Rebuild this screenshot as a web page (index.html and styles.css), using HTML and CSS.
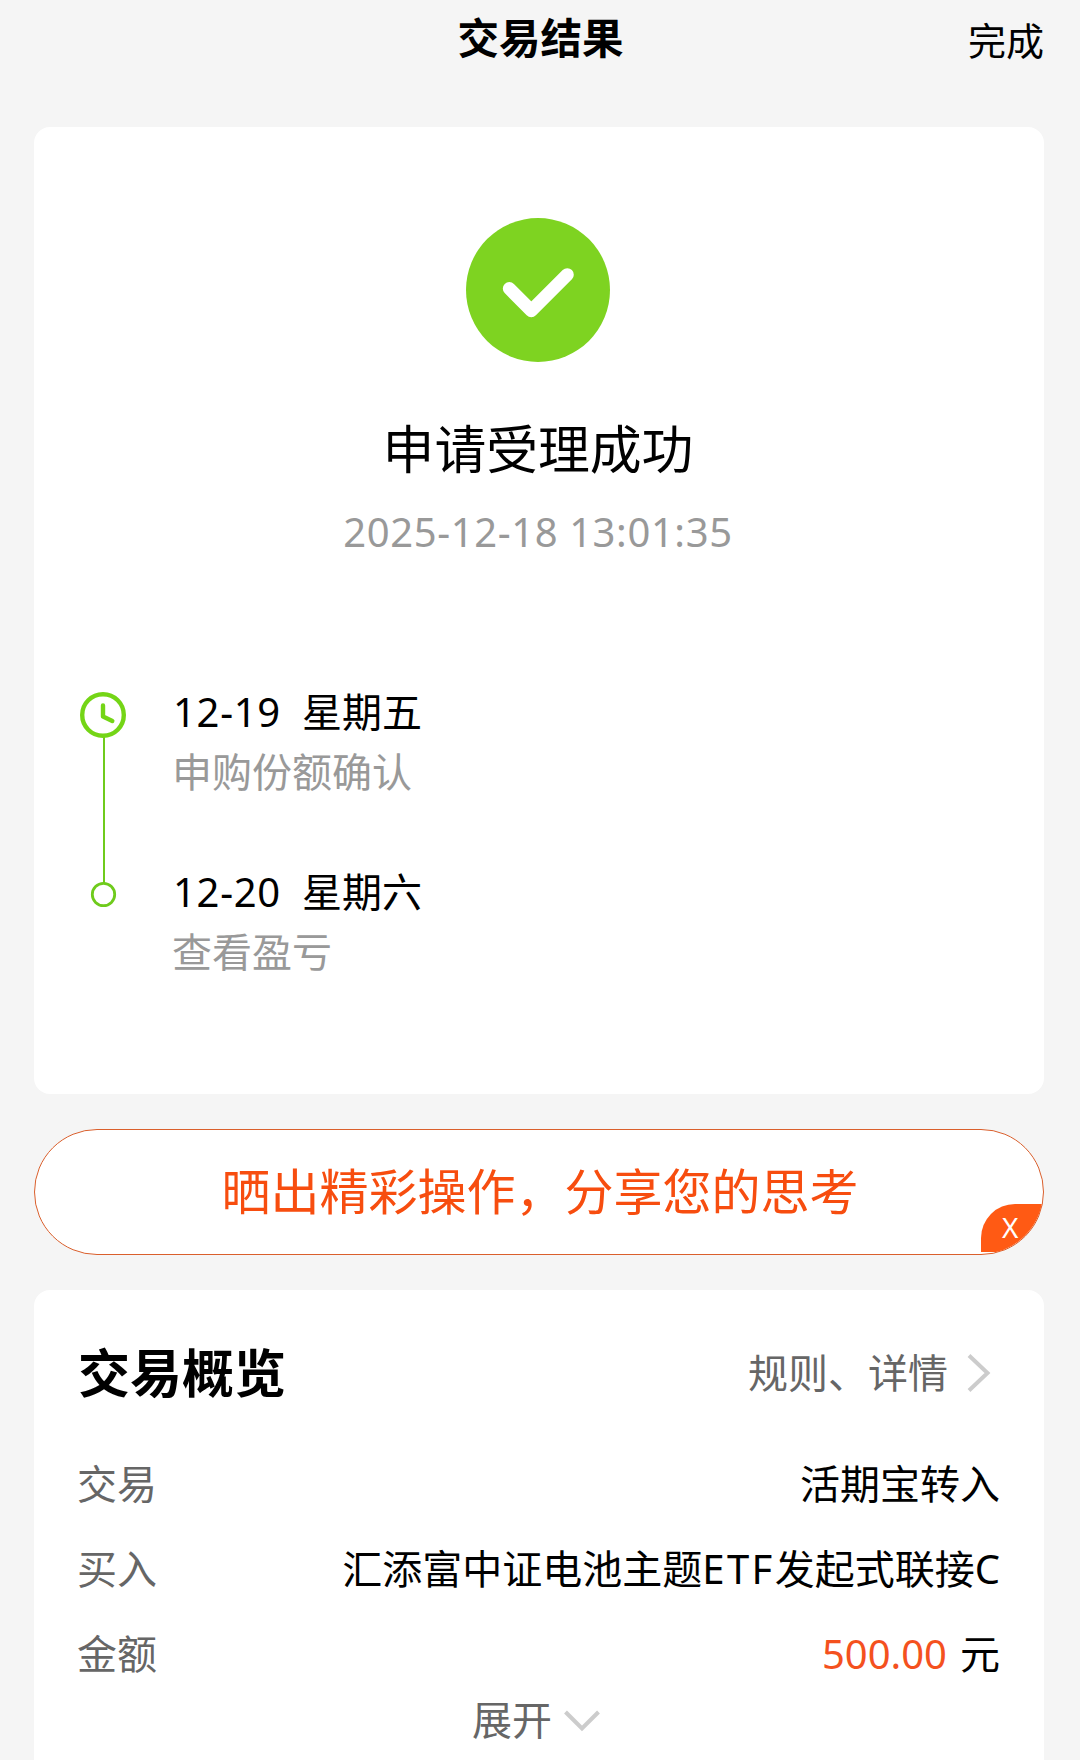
FILE: index.html
```html
<!DOCTYPE html>
<html lang="zh-CN">
<head>
<meta charset="utf-8">
<title>交易结果</title>
<link rel="stylesheet" href="styles.css">
</head>
<body>
<div class="page">
  <header class="header">
    <h1 class="header-title">交易结果</h1>
    <a class="header-done">完成</a>
  </header>

  <section class="card result">
    <svg class="result-icon" viewBox="0 0 144 144">
      <circle cx="72" cy="72" r="72" fill="#7ed321"/>
      <path d="M43.3 70.5 65.3 92.7 101.3 56.7" fill="none" stroke="#fff" stroke-width="13" stroke-linecap="round" stroke-linejoin="round"/>
    </svg>
    <h2 class="result-title">申请受理成功</h2>
    <p class="result-time">2025-12-18 13:01:35</p>

    <div class="timeline">
      <svg class="timeline-rail" viewBox="0 0 46 216">
        <path d="M24 45V191" stroke="#6fcb1c" stroke-width="2"/>
        <circle cx="23" cy="23" r="20.800" fill="#fff" stroke="#74d516" stroke-width="4.400"/>
        <path d="M23 13.500V24.500L32.300 29" fill="none" stroke="#74d516" stroke-width="4.400" stroke-linecap="round" stroke-linejoin="round"/>
        <circle cx="23.500" cy="202.500" r="11.200" fill="#fff" stroke="#6fcb1c" stroke-width="2.800"/>
      </svg>
      <ol class="steps">
        <li class="step">
          <div class="step-date"><span class="num">12-19</span><span>星期五</span></div>
          <div class="step-desc">申购份额确认</div>
        </li>
        <li class="step">
          <div class="step-date"><span class="num">12-20</span><span>星期六</span></div>
          <div class="step-desc">查看盈亏</div>
        </li>
      </ol>
    </div>
  </section>

  <div class="share">
    <span class="share-text">晒出精彩操作，分享您的思考</span>
    <span class="share-close">X</span>
  </div>

  <section class="card overview">
    <div class="overview-head">
      <h2 class="overview-title">交易概览</h2>
      <a class="overview-link">规则、详情
        <svg class="chevron-right" viewBox="0 0 24 40"><path d="M2 2.500 20.500 20 2 37.500" fill="none" stroke="#ccc" stroke-width="4"/></svg>
      </a>
    </div>
    <dl class="rows">
      <div class="row"><dt>交易</dt><dd>活期宝转入</dd></div>
      <div class="row"><dt>买入</dt><dd>汇添富中证电池主题<span class="latin">ETF</span>发起式联接C</dd></div>
      <div class="row"><dt>金额</dt><dd class="money"><span class="amount">500.00</span><span>元</span></dd></div>
    </dl>
    <div class="expand">展开
      <svg class="chevron-down" viewBox="0 0 36 22"><path d="M1.500 2 18 18.500 34.500 2" fill="none" stroke="#ccc" stroke-width="4"/></svg>
    </div>
  </section>
</div>
</body>
</html>
```
FILE: styles.css
```css
* {
  box-sizing: border-box;
  margin: 0;
  padding: 0;
}

body {
  background: #f5f5f5;
  color: #000;
  font-family: "Noto Sans", "Noto Sans CJK SC", sans-serif;
  font-size: 40px;
  line-height: 60px;
}

.page {
  display: flex;
  flex-direction: column;
  height: 1760px;
  padding: 0 36px 0 34px;
  overflow: hidden;
}

.header {
  display: grid;
  grid-template-columns: 1fr auto 1fr;
  flex: none;
  height: 127px;
  padding-top: 8px;
}

.header-title {
  grid-column: 2;
  padding-left: 3px;
  font-size: 41.5px;
  font-weight: 700;
}

.header-done {
  justify-self: end;
  padding-top: 2px;
  font-size: 38px;
}

.card {
  flex: none;
  background: #fff;
  border-radius: 16px;
}

.result {
  display: flex;
  flex-direction: column;
  align-items: center;
  height: 967px;
  padding-top: 91px;
  padding-right: 2px;
}

.result-icon {
  width: 144px;
  height: 144px;
}

.result-title {
  margin-top: 57px;
  font-size: 51.8px;
  font-weight: 400;
}

.result-time {
  margin-top: 28px;
  color: #999;
  line-height: 50px;
  letter-spacing: 0.6px;
}

.timeline {
  display: flex;
  align-self: stretch;
  gap: 46px;
  margin-top: 125px;
  padding-left: 46px;
}

.timeline-rail {
  flex: none;
  width: 46px;
  height: 216px;
  margin-top: 10px;
}

.steps {
  display: flex;
  flex-direction: column;
  gap: 60px;
  list-style: none;
}

.step-date {
  display: flex;
  gap: 21px;
}

.step-desc {
  color: #999;
}

.num {
  padding-left: 1px;
  letter-spacing: 0.7px;
}

.share {
  position: relative;
  display: flex;
  flex: none;
  align-items: center;
  justify-content: center;
  height: 126px;
  margin: 35px 0;
  overflow: hidden;
  background: #fff;
  border: 1px solid #da5f2c;
  border-radius: 63px;
  color: #f74d0f;
  font-size: 49px;
}

.share-text {
  padding: 0 0 2px 2px;
}

.share-close {
  position: absolute;
  right: 0;
  bottom: 2px;
  width: 62px;
  height: 48px;
  padding-left: 21px;
  background: #ff5a14;
  border-top-left-radius: 34px;
  color: #fff;
  font-size: 28px;
  line-height: 47px;
}

.overview {
  flex: 1;
  padding: 53px 44px 0 44px;
  border-radius: 16px 16px 0 0;
}

.overview-head {
  display: flex;
  align-items: center;
  justify-content: space-between;
}

.overview-title {
  font-size: 52px;
  font-weight: 700;
}

.overview-link {
  display: flex;
  align-items: center;
  gap: 19px;
  padding-right: 9px;
  color: #666;
}

.chevron-right {
  width: 24px;
  height: 40px;
}

.rows {
  display: flex;
  flex-direction: column;
  gap: 25px;
  margin-top: 51px;
}

.row {
  display: flex;
  justify-content: space-between;
}

.row dt {
  margin-left: -1px;
  color: #666;
}

.latin {
  letter-spacing: 2.4px;
}

.money {
  display: flex;
  gap: 13px;
}

.amount {
  color: #f4511e;
}

.expand {
  display: flex;
  align-items: center;
  justify-content: center;
  gap: 12px;
  margin-top: 6px;
  padding-right: 6px;
  color: #666;
}

.chevron-down {
  width: 36px;
  height: 22px;
  margin-top: 2px;
}
```
